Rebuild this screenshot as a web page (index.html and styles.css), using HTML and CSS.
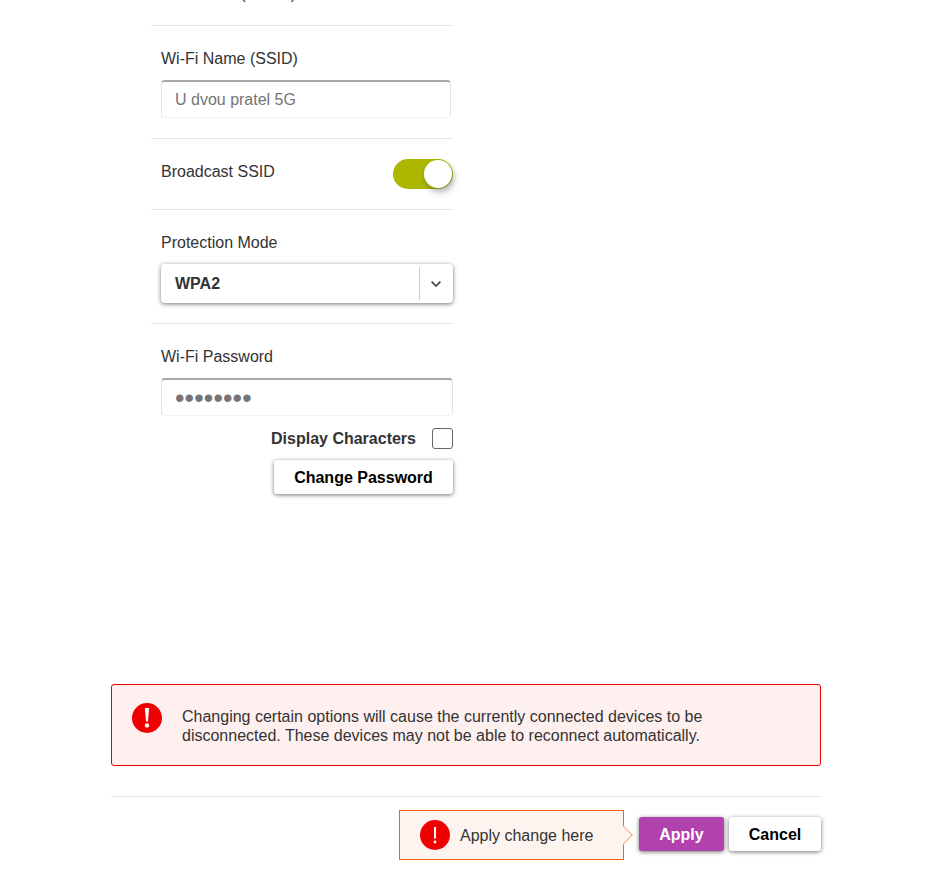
FILE: index.html
```html
<!DOCTYPE html>
<html lang="en">
<head>
    <meta charset="UTF-8">
    <meta name="viewport" content="width=device-width, initial-scale=1.0">
    <title>Wi-Fi Settings</title>
    <link rel="stylesheet" href="styles.css">
</head>
<body>
    <div class="page">
        <div class="settings">
            <div class="row row-top">
                <span class="label">Bandwidth (5 GHz)</span>
            </div>
            <div class="row row-name">
                <label class="label">Wi-Fi Name (SSID)</label>
                <div class="input input-name">U dvou pratel 5G</div>
            </div>
            <div class="row row-broadcast">
                <span class="label">Broadcast SSID</span>
                <div class="toggle"><span class="knob"></span></div>
            </div>
            <div class="row row-mode">
                <label class="label">Protection Mode</label>
                <div class="select">
                    <span class="select-value">WPA2</span>
                    <span class="select-arrow">
                        <svg width="10" height="6" viewBox="0 0 10 6"><path d="M0.6 0.7 L5 5 L9.4 0.7" fill="none" stroke="#444" stroke-width="1.7"/></svg>
                    </span>
                </div>
            </div>
            <div class="row-password">
                <label class="label">Wi-Fi Password</label>
                <div class="input input-password">&bull;&bull;&bull;&bull;&bull;&bull;&bull;&bull;</div>
                <div class="display-chars">
                    <span>Display Characters</span>
                    <span class="checkbox"></span>
                </div>
                <button class="btn btn-change">Change Password</button>
            </div>
        </div>

        <div class="warning">
            <svg class="warning-icon" width="30" height="30" viewBox="0 0 30 30">
                <circle cx="15" cy="15" r="15" fill="#f00000"/>
                <path d="M12.9 5 H17.1 L16 18.5 H14 Z" fill="#fff"/>
                <circle cx="15" cy="22.4" r="2.2" fill="#fff"/>
            </svg>
            <p>Changing certain options will cause the currently connected devices to be disconnected. These devices may not be able to reconnect automatically.</p>
        </div>

        <div class="footer">
            <div class="hint">
                <svg width="30" height="30" viewBox="0 0 30 30">
                    <circle cx="15" cy="15" r="15" fill="#f00000"/>
                    <path d="M14 7 H16 V18.5 H14 Z" fill="#fff"/>
                    <circle cx="15" cy="22" r="1.4" fill="#fff"/>
                </svg>
                <span class="hint-text">Apply change here</span>
            </div>
            <button class="btn btn-apply">Apply</button>
            <button class="btn btn-cancel">Cancel</button>
        </div>
    </div>
</body>
</html>
```

FILE: styles.css
```css
* {
    margin: 0;
    padding: 0;
    box-sizing: border-box;
}

html, body {
    height: 871px;
    overflow: hidden;
}

body {
    background: #fff;
    color: #333;
    font-family: "Liberation Sans", Arial, sans-serif;
    font-size: 16px;
}

.page {
    width: 710px;
    margin-left: 111px;
}

.settings {
    width: 302px;
    margin-left: 40px;
}

.row {
    border-bottom: 1px solid #e6e6e6;
    padding: 0 0 0 10px;
}

.row-top {
    margin-top: -15px;
    height: 41px;
}

.label {
    display: block;
    line-height: 18px;
}

.row-name {
    height: 113px;
    padding-top: 24px;
}

.input {
    background: #fff;
    border: 1px solid #e4e4e4;
    border-top: 2px solid #a8a8a8;
    border-bottom-color: #f2f2f2;
    border-radius: 4px;
    color: #757575;
    height: 38px;
    line-height: 36px;
    padding-left: 13px;
}

.input-name {
    width: 290px;
    margin-top: 12px;
}

.row-broadcast {
    height: 71px;
    padding-top: 24px;
    display: flex;
    justify-content: space-between;
}

.toggle {
    width: 60px;
    height: 30px;
    margin-top: -4px;
    background: #adb700;
    border-radius: 15px;
    padding: 1px;
    display: flex;
    justify-content: flex-end;
}

.knob {
    width: 28px;
    height: 28px;
    background: #fff;
    border-radius: 50%;
    box-shadow: 2px 4px 6px rgba(0, 0, 0, 0.3);
}

.row-mode {
    height: 114px;
    padding-top: 24px;
}

.select {
    display: flex;
    justify-content: space-between;
    align-items: center;
    width: 292px;
    height: 39px;
    margin-top: 12px;
    background: #fff;
    border-radius: 4px;
    box-shadow: 0 1px 4px rgba(0, 0, 0, 0.55);
    padding-left: 14px;
}

.select-value {
    font-weight: 700;
    color: #333;
}

.select-arrow {
    display: flex;
    align-items: center;
    justify-content: center;
    width: 34px;
    height: 33px;
    padding-right: 1px;
    border-left: 1px solid #ccc;
}

.row-password {
    padding: 24px 0 0 10px;
}

.input-password {
    width: 292px;
    margin-top: 12px;
    font-size: 27px;
    letter-spacing: 0.15px;
}

.display-chars {
    display: flex;
    justify-content: flex-end;
    align-items: center;
    gap: 16px;
    margin-top: 12px;
    font-weight: 700;
}

.checkbox {
    width: 21px;
    height: 21px;
    border: 1px solid #666;
    border-radius: 3px;
}

.btn {
    border: 0;
    border-radius: 3px;
    background: #fff;
    color: #000;
    font-family: inherit;
    font-size: 16px;
    font-weight: 700;
    padding-top: 2px;
    box-shadow: 0 1px 4px rgba(0, 0, 0, 0.55);
}

.btn-change {
    display: block;
    width: 179px;
    height: 34px;
    margin: 11px 0 0 auto;
}

.warning {
    display: flex;
    height: 82px;
    margin-top: 190px;
    padding: 18px 20px 0 20px;
    background: #fff0f0;
    border: 1px solid #e60000;
    border-radius: 3px;
}

.warning-icon {
    flex-shrink: 0;
    margin-right: 20px;
}

.warning p {
    width: 560px;
    margin-top: 4px;
    line-height: 19px;
}

.footer {
    display: flex;
    justify-content: flex-end;
    align-items: center;
    gap: 5px;
    margin-top: 30px;
    padding-top: 13px;
    border-top: 1px solid #e6e6e6;
}

.hint {
    position: relative;
    display: flex;
    align-items: center;
    gap: 10px;
    width: 225px;
    height: 50px;
    margin-right: 10px;
    padding-left: 20px;
    background: #fdf4ef;
    border: 1px solid #f0641e;
}

.hint-text {
    padding-top: 2px;
}

.hint::after {
    content: "";
    position: absolute;
    right: -7px;
    top: 17px;
    width: 13px;
    height: 13px;
    background: #fdf4ef;
    border-top: 1px solid #f9a87e;
    border-right: 1px solid #f9a87e;
    transform: rotate(45deg);
}

.btn-apply {
    width: 85px;
    height: 34px;
    margin-bottom: 2px;
    background: #b041ad;
    color: #fff;
}

.btn-cancel {
    width: 92px;
    height: 34px;
    margin-bottom: 2px;
}
```
